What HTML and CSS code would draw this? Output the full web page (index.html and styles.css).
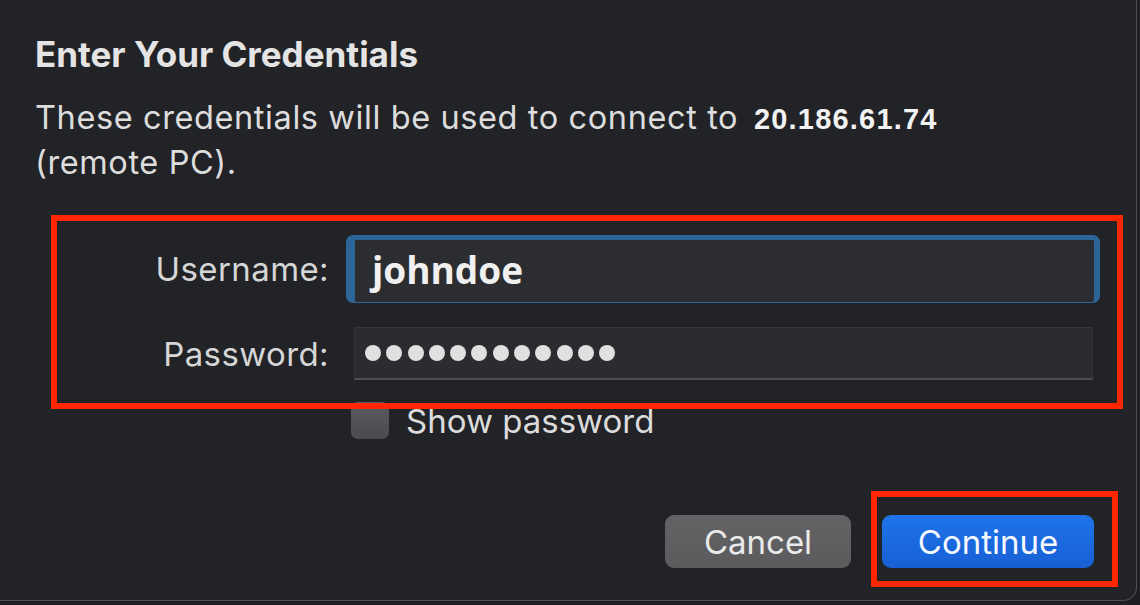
FILE: index.html
```html
<!DOCTYPE html>
<html lang="en">
<head>
<meta charset="utf-8">
<title>Enter Your Credentials</title>
<link rel="stylesheet" href="styles.css">
</head>
<body>
<div class="window">
  <div class="dialog">
    <h1 class="title">Enter Your Credentials</h1>
    <p class="message">These credentials will be used to connect to <span class="host">20.186.61.74</span><br>(remote PC).</p>

    <div class="fields">
      <label class="label">Username:</label>
      <div class="input input-focus"><span class="value">johndoe</span></div>
      <label class="label">Password:</label>
      <div class="input input-pass" aria-label="password">
        <span class="dot"></span><span class="dot"></span><span class="dot"></span><span class="dot"></span><span class="dot"></span><span class="dot"></span><span class="dot"></span><span class="dot"></span><span class="dot"></span><span class="dot"></span><span class="dot"></span><span class="dot"></span>
      </div>
    </div>

    <div class="check-row">
      <span class="checkbox"></span>
      <span class="check-label">Show password</span>
    </div>

    <div class="buttons">
      <button class="btn btn-cancel">Cancel</button>
      <div class="highlight">
        <button class="btn btn-primary">Continue</button>
      </div>
    </div>
  </div>
</div>
</body>
</html>
```

FILE: styles.css
```css
* { box-sizing: border-box; }

html, body {
  margin: 0;
  padding: 0;
  width: 1140px;
  height: 605px;
  overflow: hidden;
  background: #1e1f22;
}

.window {
  width: 1137px;
  height: 601px;
  background: #222327;
  border-right: 1px solid #4e4f53;
  border-bottom: 1px solid #4e4f53;
  border-bottom-right-radius: 14px;
}

.dialog {
  padding: 34px 18px 0 35px;
  font-family: Inter, "Liberation Sans", sans-serif;
  color: #dedede;
}

.title {
  margin: 0;
  font-size: 35px;
  font-weight: 700;
  line-height: 40px;
  color: #e4e4e4;
}

.message {
  margin: 22px 0 0 0;
  font-size: 32.5px;
  letter-spacing: 0.6px;
  line-height: 44px;
  color: #dddddd;
}

.host {
  font-family: "Liberation Sans", Arial, sans-serif;
  font-weight: 700;
  font-size: 29px;
  letter-spacing: 1.2px;
  color: #f2f2f2;
  margin-left: 6px;
}

.fields {
  position: relative;
  z-index: 1;
  margin: 30px 0 0 16px;
  width: 1072px;
  height: 194px;
  border: 6px solid #ff2600;
  padding-top: 14px;
  display: grid;
  grid-template-columns: 272px 1fr;
  grid-template-rows: 68px 53px;
  row-gap: 24px;
  align-items: center;
}

.label {
  text-align: right;
  font-size: 33px;
  letter-spacing: 0.4px;
  color: #d6d6d6;
}

.input {
  height: 100%;
  display: flex;
  align-items: center;
  background: #2c2d31;
}

.input-focus {
  margin-left: 17px;
  width: 754px;
  border-style: solid;
  border-color: #2c6597;
  border-width: 5px 6px 1px 9px;
  border-radius: 7px;
  padding-left: 17px;
}

.value {
  font-family: "Open Sans", Inter, sans-serif;
  font-weight: 700;
  font-size: 37px;
  color: #f0f0f0;
  position: relative;
  top: -2px;
}

.input-pass {
  margin-left: 25px;
  width: 739px;
  border-top: 1px solid #36373b;
  border-left: 1px solid #35363a;
  border-right: 1px solid #35363a;
  border-bottom: 2px solid #4c4d51;
  padding-left: 10px;
  gap: 5.3px;
  background: #2b2c30;
}

.dot {
  width: 16px;
  height: 16px;
  border-radius: 50%;
  background: #e0e0e0;
}

.check-row {
  margin: -7px 0 0 316px;
  height: 37px;
  display: flex;
  align-items: center;
  gap: 17px;
}

.checkbox {
  width: 38px;
  height: 37px;
  border-radius: 7px;
  background: linear-gradient(#5c5c60, #4a4b4f);
}

.check-label {
  font-size: 33px;
  color: #dcdcdc;
}

.buttons {
  margin-top: 52px;
  display: flex;
  justify-content: flex-end;
  align-items: flex-start;
}

.btn {
  font-family: Inter, "Liberation Sans", sans-serif;
  font-size: 33px;
  height: 53px;
  border: none;
  border-radius: 9px;
  padding: 0;
  color: #eaeaea;
}

.btn-cancel {
  margin-top: 24px;
  margin-right: 20px;
  width: 186px;
  background: linear-gradient(#636366, #5b5b5e);
}

.highlight {
  width: 247px;
  height: 96px;
  border: 6px solid #ff2600;
  padding: 18px 0 0 5px;
}

.btn-primary {
  width: 212px;
  background: linear-gradient(#1f73ea, #1760d4);
  color: #f6f8ff;
}
```
